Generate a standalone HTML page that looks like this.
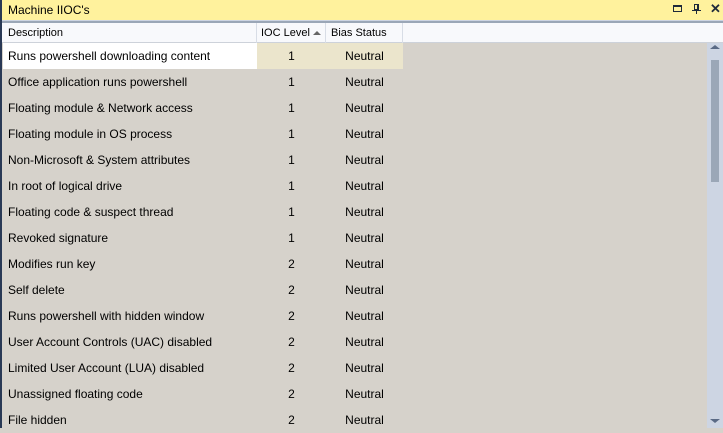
<!DOCTYPE html>
<html><head><style>
*{margin:0;padding:0;box-sizing:border-box}
body{width:723px;height:428px;overflow:hidden;background:#d6d2cb;font-family:"Liberation Sans",sans-serif;font-size:12px;color:#000;position:relative;white-space:nowrap}
.title{position:absolute;left:0;top:0;width:723px;height:20px;background:#fff29d;padding:3px 0 0 8px;font-size:12px}
.leftb{position:absolute;left:0;top:0;width:2px;height:428px;background:#293955}
.sep{position:absolute;left:0;top:20px;width:723px;height:3px;background:#9ba7b7;border-top:1px solid #cdd5e3}
.hdr{position:absolute;left:2px;top:23px;width:721px;height:20px;background:#f8f9fc;border-bottom:1px solid #cdd2da;font-size:11px}
.hdr div{position:absolute;top:0;height:20px;padding-top:4px;border-right:1px solid #d8dde6;overflow:hidden}
.row{position:absolute;left:3px;height:26px;width:400px}
.row div{position:absolute;top:0;height:26px;padding-top:6px}
.c1{left:0;width:254px;padding-left:5px}
.c2{left:254px;width:69px;text-align:center}
.c3{left:323px;width:77px;text-align:center}
.sb{position:absolute;left:707px;top:43px;width:16px;height:385px;background:#cdd5e3}
.th{position:absolute;left:711px;top:60px;width:8px;height:122px;background:#9ba7b7}
</style></head><body>
<div class="title">Machine IIOC's</div>
<div style="position:absolute;left:673px;top:5px;width:9px;height:7px;border:1px solid #1e2a3a;border-top-width:2px"></div>
<div style="position:absolute;left:694px;top:4px;width:5px;height:6px;border:1px solid #1e2a3a;border-right-width:2px"></div>
<div style="position:absolute;left:692px;top:10px;width:9px;height:1px;background:#1e2a3a"></div>
<div style="position:absolute;left:696px;top:10px;width:1px;height:4px;background:#1e2a3a"></div>
<div style="position:absolute;left:710px;top:1px;font-size:13px;font-weight:bold;color:#1e2a3a">✕</div>
<div class="sep"></div>
<div class="hdr">
<div style="left:0;width:255px;padding-left:6px">Description</div>
<div style="left:255px;width:69px;padding-left:4px">IOC Level</div>
<div style="left:324px;width:77px;padding-left:5px">Bias Status</div>
</div>
<div style="position:absolute;left:313px;top:31px;width:0;height:0;border-left:4.5px solid transparent;border-right:4.5px solid transparent;border-bottom:4px solid #666"></div>
<div class="row" style="top:43px"><div class="c1" style="background:#fff">Runs powershell downloading content</div><div class="c2" style="background:#ebe5cc">1</div><div class="c3" style="background:#ebe5cc">Neutral</div></div>
<div class="row" style="top:69px"><div class="c1">Office application runs powershell</div><div class="c2">1</div><div class="c3">Neutral</div></div>
<div class="row" style="top:95px"><div class="c1">Floating module &amp; Network access</div><div class="c2">1</div><div class="c3">Neutral</div></div>
<div class="row" style="top:121px"><div class="c1">Floating module in OS process</div><div class="c2">1</div><div class="c3">Neutral</div></div>
<div class="row" style="top:147px"><div class="c1">Non-Microsoft &amp; System attributes</div><div class="c2">1</div><div class="c3">Neutral</div></div>
<div class="row" style="top:173px"><div class="c1">In root of logical drive</div><div class="c2">1</div><div class="c3">Neutral</div></div>
<div class="row" style="top:199px"><div class="c1">Floating code &amp; suspect thread</div><div class="c2">1</div><div class="c3">Neutral</div></div>
<div class="row" style="top:225px"><div class="c1">Revoked signature</div><div class="c2">1</div><div class="c3">Neutral</div></div>
<div class="row" style="top:251px"><div class="c1">Modifies run key</div><div class="c2">2</div><div class="c3">Neutral</div></div>
<div class="row" style="top:277px"><div class="c1">Self delete</div><div class="c2">2</div><div class="c3">Neutral</div></div>
<div class="row" style="top:303px"><div class="c1">Runs powershell with hidden window</div><div class="c2">2</div><div class="c3">Neutral</div></div>
<div class="row" style="top:329px"><div class="c1">User Account Controls (UAC) disabled</div><div class="c2">2</div><div class="c3">Neutral</div></div>
<div class="row" style="top:355px"><div class="c1">Limited User Account (LUA) disabled</div><div class="c2">2</div><div class="c3">Neutral</div></div>
<div class="row" style="top:381px"><div class="c1">Unassigned floating code</div><div class="c2">2</div><div class="c3">Neutral</div></div>
<div class="row" style="top:407px"><div class="c1">File hidden</div><div class="c2">2</div><div class="c3">Neutral</div></div>
<div class="sb"></div>
<div class="th"></div>
<div style="position:absolute;left:710px;top:45px;width:0;height:0;border-left:5px solid transparent;border-right:5px solid transparent;border-bottom:4px solid #5a6a85"></div>
<div style="position:absolute;left:710px;top:419px;width:0;height:0;border-left:5px solid transparent;border-right:5px solid transparent;border-top:4px solid #5a6a85"></div>
<div class="leftb"></div>
</body></html>
